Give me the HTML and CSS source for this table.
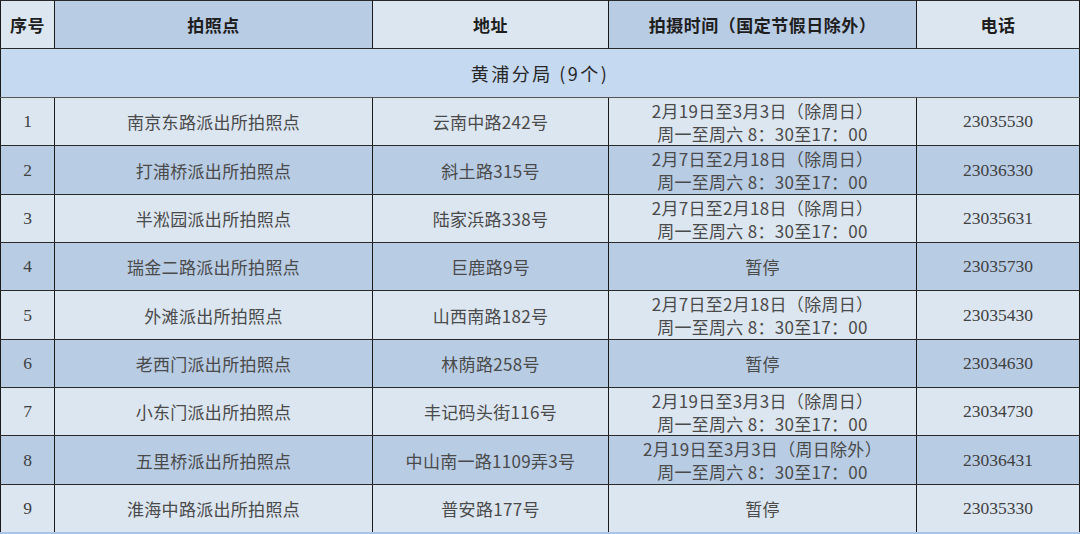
FILE: index.html
```html
<!DOCTYPE html>
<html lang="zh-CN">
<head>
<meta charset="utf-8">
<title>黄浦分局拍照点</title>
<link rel="stylesheet" href="styles.css">
</head>
<body>
<table class="sheet">
  <colgroup>
    <col class="c-no">
    <col class="c-name">
    <col class="c-addr">
    <col class="c-time">
    <col class="c-tel">
  </colgroup>
  <thead>
    <tr class="head">
      <th class="light">序号</th>
      <th class="dark">拍照点</th>
      <th class="light">地址</th>
      <th class="dark">拍摄时间（国定节假日除外）</th>
      <th class="light">电话</th>
    </tr>
  </thead>
  <tbody>
    <tr class="group tall"><td colspan="5">黄浦分局 (9个)</td></tr>
    <tr class="odd"><td class="num">1</td><td>南京东路派出所拍照点</td><td>云南中路242号</td><td>2月19日至3月3日（除周日）<br>周一至周六 8：30至17：00</td><td class="num">23035530</td></tr>
    <tr class="even tall"><td class="num">2</td><td>打浦桥派出所拍照点</td><td>斜土路315号</td><td>2月7日至2月18日（除周日）<br>周一至周六 8：30至17：00</td><td class="num">23036330</td></tr>
    <tr class="odd"><td class="num">3</td><td>半淞园派出所拍照点</td><td>陆家浜路338号</td><td>2月7日至2月18日（除周日）<br>周一至周六 8：30至17：00</td><td class="num">23035631</td></tr>
    <tr class="even"><td class="num">4</td><td>瑞金二路派出所拍照点</td><td>巨鹿路9号</td><td>暂停</td><td class="num">23035730</td></tr>
    <tr class="odd tall"><td class="num">5</td><td>外滩派出所拍照点</td><td>山西南路182号</td><td>2月7日至2月18日（除周日）<br>周一至周六 8：30至17：00</td><td class="num">23035430</td></tr>
    <tr class="even"><td class="num">6</td><td>老西门派出所拍照点</td><td>林荫路258号</td><td>暂停</td><td class="num">23034630</td></tr>
    <tr class="odd"><td class="num">7</td><td>小东门派出所拍照点</td><td>丰记码头街116号</td><td>2月19日至3月3日（除周日）<br>周一至周六 8：30至17：00</td><td class="num">23034730</td></tr>
    <tr class="even tall"><td class="num">8</td><td>五里桥派出所拍照点</td><td>中山南一路1109弄3号</td><td>2月19日至3月3日（周日除外）<br>周一至周六 8：30至17：00</td><td class="num">23036431</td></tr>
    <tr class="odd last"><td class="num">9</td><td>淮海中路派出所拍照点</td><td>普安路177号</td><td>暂停</td><td class="num">23035330</td></tr>
  </tbody>
</table>
</body>
</html>
```

FILE: styles.css
```css
html, body {
  margin: 0;
  padding: 0;
  background: #dce6f1;
}

.sheet {
  width: 1079px;
  border-collapse: collapse;
  table-layout: fixed;
  font-family: "Liberation Serif", "Noto Sans CJK SC", serif;
  font-size: 17px;
  color: #4a4a4a;
}

.c-no { width: 54px; }
.c-name { width: 318px; }
.c-addr { width: 236px; }
.c-time { width: 308px; }
.c-tel { width: 163px; }

.sheet th,
.sheet td {
  border-left: 1px solid #1a1a1a;
  border-right: 1px solid #1a1a1a;
  border-top: 1px solid #2a2a2a;
  border-bottom: 1px solid #2a2a2a;
  text-align: center;
  vertical-align: middle;
  padding: 0;
  line-height: 23px;
  overflow: hidden;
  white-space: nowrap;
}

.head th {
  height: 47px;
  font-family: "Noto Sans CJK SC", sans-serif;
  font-weight: 700;
  color: #1e1e1e;
  font-size: 17px;
  letter-spacing: 0.5px;
}

.light { background: #dce6f1; }
.dark { background: #b8cce4; }

.group td {
  height: 47px;
  background: #c5d9f1;
  font-family: "Noto Sans CJK SC", sans-serif;
  font-size: 18px;
  color: #262626;
  letter-spacing: 2.5px;
  border-top: 1px solid #555;
  border-bottom: 1px solid #555;
}

.odd td, .even td {
  height: 47px;
  font-family: "Noto Sans CJK SC", sans-serif;
  letter-spacing: 0.3px;
}

.sheet .tall td { height: 48px; }

.odd td { background: #dce6f1; }
.even td { background: #b8cce4; }

.sheet td.num {
  font-family: "Liberation Serif", serif;
  letter-spacing: 0;
  font-size: 17.5px;
  color: #404040;
}

.last td { border-bottom: 2px solid #a9c4e6; }
```
